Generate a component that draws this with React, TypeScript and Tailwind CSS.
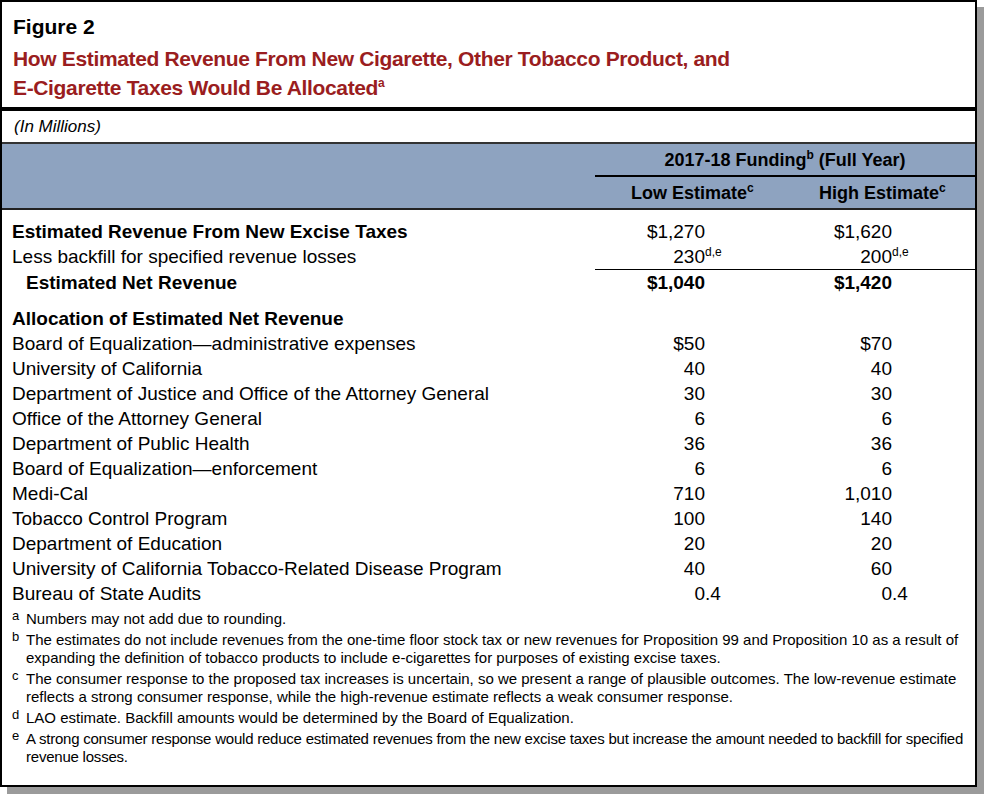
const font = { fontFamily: '"Liberation Sans", Arial, sans-serif' };

type Row = { label: string; low: string; high: string; lowHang?: string; highHang?: string };

const allocations: Row[] = [
  { label: "Board of Equalization—administrative expenses", low: "$50", high: "$70" },
  { label: "University of California", low: "40", high: "40" },
  { label: "Department of Justice and Office of the Attorney General", low: "30", high: "30" },
  { label: "Office of the Attorney General", low: "6", high: "6" },
  { label: "Department of Public Health", low: "36", high: "36" },
  { label: "Board of Equalization—enforcement", low: "6", high: "6" },
  { label: "Medi-Cal", low: "710", high: "1,010" },
  { label: "Tobacco Control Program", low: "100", high: "140" },
  { label: "Department of Education", low: "20", high: "20" },
  { label: "University of California Tobacco-Related Disease Program", low: "40", high: "60" },
  { label: "Bureau of State Audits", low: "0", high: "0", lowHang: ".4", highHang: ".4" },
];

const notes: { mark: string; text: string; tight?: boolean }[] = [
  { mark: "a", text: "Numbers may not add due to rounding." },
  {
    mark: "b",
    text: "The estimates do not include revenues from the one-time floor stock tax or new revenues for Proposition 99 and Proposition 10 as a result of expanding the definition of tobacco products to include e-cigarettes for purposes of existing excise taxes.",
  },
  {
    mark: "c",
    text: "The consumer response to the proposed tax increases is uncertain, so we present a range of plausible outcomes. The low-revenue estimate reflects a strong consumer response, while the high-revenue estimate reflects a weak consumer response.",
  },
  { mark: "d", text: "LAO estimate. Backfill amounts would be determined by the Board of Equalization." },
  {
    mark: "e",
    text: "A strong consumer response would reduce estimated revenues from the new excise taxes but increase the amount needed to backfill for specified revenue losses.",
    tight: true,
  },
];

function Num({ value, hang, sup, wide }: { value: string; hang?: string; sup?: string; wide?: boolean }) {
  return (
    <div className="flex w-[190px] shrink-0">
      <span className={`${wide ? "w-[107px]" : "w-[110px]"} text-right`}>{value}</span>
      <span className="flex-1 text-left">
        {hang}
        {sup && <sup className="relative -top-[7px] text-[12px]">{sup}</sup>}
      </span>
    </div>
  );
}

function DataRow({ row, bold, indent }: { row: Row; bold?: boolean; indent?: boolean }) {
  return (
    <div className="flex h-[25px] items-center">
      <div className={`flex-1 ${indent ? "pl-[24px]" : "pl-[10px]"} ${bold ? "font-bold" : ""}`}>{row.label}</div>
      <Num value={row.low} hang={row.lowHang} />
      <Num value={row.high} hang={row.highHang} wide />
    </div>
  );
}

export default function App() {
  return (
    <div className="h-[796px] w-[984px] bg-white" style={font}>
      <div className="flex h-[787px] w-[977px] flex-col border-2 border-black bg-white text-black shadow-[7px_7px_0_#9b9b9b]">
        <div className="h-[105px] px-[11px] pt-[12px]">
          <div className="text-[21px] font-bold leading-[25px]">Figure 2</div>
          <div className="mt-[5px] text-[21px] font-bold leading-[29px] tracking-[-0.35px] text-[#9a1d20]">
            How Estimated Revenue From New Cigarette, Other Tobacco Product, and
            <br />
            E-Cigarette Taxes Would Be Allocated
            <sup className="relative -top-[8px] text-[12px] tracking-normal">a</sup>
          </div>
        </div>
        <div className="h-[4px] bg-black" />
        <div className="flex h-[33px] items-center border-b-2 border-[#333] pl-[12px] text-[17px] italic">
          (In Millions)
        </div>
        <div className="flex h-[66px] border-b-2 border-[#222] bg-[#8ea3c0] text-[18px] font-bold">
          <div className="flex-1" />
          <div className="flex w-[380px] flex-col">
            <div className="flex h-[33px] items-center justify-center border-b-2 border-black pt-[2px]">
              <span>
                2017-18 Funding<sup className="relative -top-[7px] text-[12px]">b</sup> (Full Year)
              </span>
            </div>
            <div className="flex flex-1 items-center">
              <div className="w-[190px] pl-[36px] pt-[2px]">
                Low Estimate<sup className="relative -top-[7px] text-[12px]">c</sup>
              </div>
              <div className="w-[190px] pl-[34px] pt-[2px]">
                High Estimate<sup className="relative -top-[7px] text-[12px]">c</sup>
              </div>
            </div>
          </div>
        </div>

        <div className="pt-[9px] text-[19px] leading-[25px]">
          <DataRow row={{ label: "Estimated Revenue From New Excise Taxes", low: "$1,270", high: "$1,620" }} bold />
          <div className="flex h-[25px] items-center">
            <div className="flex-1 pl-[10px]">Less backfill for specified revenue losses</div>
            <Num value="230" sup="d,e" />
            <Num value="200" sup="d,e" wide />
          </div>
          <div className="flex">
            <div className="flex-1" />
            <div className="h-[1px] w-[380px] bg-black" />
          </div>
          <div className="flex h-[25px] items-center font-bold">
            <div className="flex-1 pl-[24px]">Estimated Net Revenue</div>
            <Num value="$1,040" />
            <Num value="$1,420" wide />
          </div>

          <div className="mt-[11px] h-[25px] pl-[10px] font-bold">Allocation of Estimated Net Revenue</div>
          {allocations.map((r) => (
            <DataRow key={r.label} row={r} />
          ))}
        </div>

        <div className="mt-[4px] pl-[10px] pr-[3px] text-[15px] leading-[18px]">
          {notes.map((n) => (
            <div key={n.mark} className="mb-[3px] flex">
              <span className="w-[14px] shrink-0 text-[13px] leading-[12px]">{n.mark}</span>
              <span className={n.tight ? "tracking-[-0.22px]" : ""}>{n.text}</span>
            </div>
          ))}
        </div>
      </div>
    </div>
  );
}
